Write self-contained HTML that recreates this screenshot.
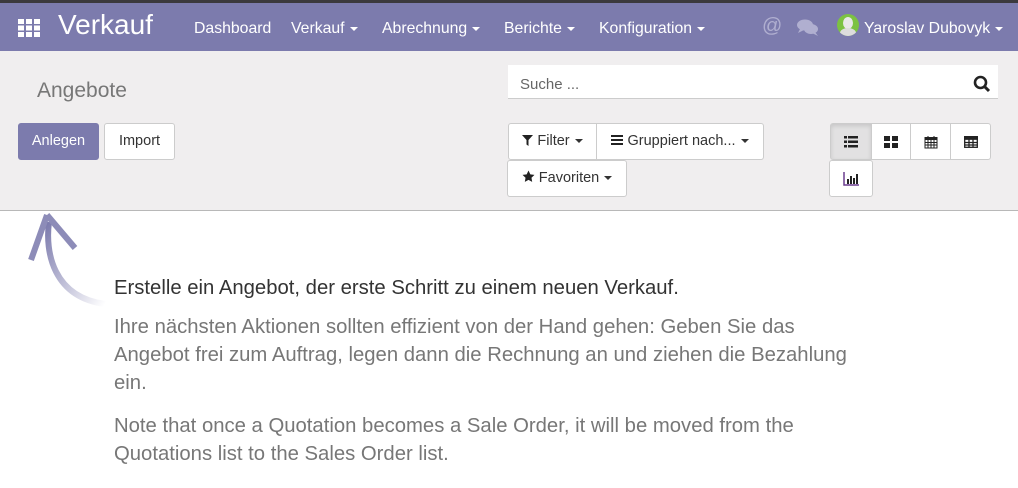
<!DOCTYPE html>
<html><head><meta charset="utf-8"><style>
*{box-sizing:border-box;margin:0;padding:0}
body{width:1018px;height:488px;overflow:hidden;background:#fff;font-family:"Liberation Sans",sans-serif;position:relative}
.top{position:absolute;left:0;top:0;width:1018px;height:3px;background:#3b393d}
.nav{position:absolute;left:0;top:3px;width:1018px;height:48px;background:#7c7bad;color:#fff}
.nav span{position:absolute;top:17px;font-size:15.8px}
.car{display:inline-block;width:0;height:0;border-left:4px solid transparent;border-right:4px solid transparent;border-top:4px solid #fff;vertical-align:middle;margin-left:5px}
.cp{position:absolute;left:0;top:51px;width:1018px;height:160px;background:#f0eeef;border-bottom:1px solid #b8b8b8}
.btn{position:absolute;background:#fff;border:1px solid #ccc;border-radius:3px;font-size:14.5px;color:#333;text-align:center}
.p{position:absolute;left:114px;font-size:20.3px;color:#777;line-height:28px;width:740px}
</style></head><body>
<div class="top"></div>
<div class="nav">
<svg style="position:absolute;left:18px;top:16px" width="22" height="18" viewBox="0 0 22 18" fill="#fff"><rect x="0" y="0" width="6" height="5"/><rect x="8" y="0" width="6" height="5"/><rect x="16" y="0" width="6" height="5"/><rect x="0" y="6.5" width="6" height="5"/><rect x="8" y="6.5" width="6" height="5"/><rect x="16" y="6.5" width="6" height="5"/><rect x="0" y="13" width="6" height="5"/><rect x="8" y="13" width="6" height="5"/><rect x="16" y="13" width="6" height="5"/></svg>
<span style="left:58px;top:6px;font-size:28px">Verkauf</span>
<span style="left:194px">Dashboard</span>
<span style="left:291px">Verkauf<i class="car"></i></span>
<span style="left:382px">Abrechnung<i class="car"></i></span>
<span style="left:504px">Berichte<i class="car"></i></span>
<span style="left:599px">Konfiguration<i class="car"></i></span>
<span style="left:762px;top:12px;font-size:20px;color:#b0afd0">@</span>
<svg style="position:absolute;left:797px;top:16px" width="22" height="18" viewBox="0 0 22 18" fill="#b0afd0"><ellipse cx="8" cy="6" rx="8" ry="5.5"/><path d="M3 10 L1 14 L7 11Z"/><ellipse cx="14" cy="10" rx="7" ry="5"/><path d="M18 13 L21 17 L15 14Z"/></svg>
<div style="position:absolute;left:837px;top:11px;width:22px;height:22px;border-radius:50%;background:#7cc242;overflow:hidden"><div style="position:absolute;left:6px;top:3px;width:10px;height:12px;border-radius:50%;background:#e8e8e8"></div><div style="position:absolute;left:3px;top:14px;width:16px;height:10px;border-radius:50%;background:#ddd"></div></div>
<span style="left:864px">Yaroslav Dubovyk<i class="car"></i></span>
</div>
<div class="cp">
<div style="position:absolute;left:37px;top:28px;font-size:21px;color:#777">Angebote</div>
<div class="btn" style="left:18px;top:72px;width:81px;height:37px;line-height:35px;background:#7c7bad;border-color:#7c7bad;color:#fff">Anlegen</div>
<div class="btn" style="left:104px;top:72px;width:71px;height:37px;line-height:35px">Import</div>
<div style="position:absolute;left:508px;top:14px;width:490px;height:34px;background:#fff;border-bottom:1px solid #ccc;font-size:15px;color:#666;padding:11px 12px">Suche ...</div>
<svg style="position:absolute;left:973px;top:24px" width="18" height="18" viewBox="0 0 18 18"><circle cx="7.5" cy="7.5" r="5.5" fill="none" stroke="#222" stroke-width="2.6"/><path d="M11.5 11.5 L16 16" stroke="#222" stroke-width="3"/></svg>
<div class="btn" style="left:508px;top:72px;width:89px;height:37px;line-height:35px;border-radius:3px 0 0 3px"><svg width="11" height="11" viewBox="0 0 11 11" style="vertical-align:-1px"><path d="M0 0H11L6.5 5V11L4.5 9.5V5Z" fill="#222"/></svg> Filter<i class="car" style="border-top-color:#333"></i></div>
<div class="btn" style="left:596px;top:72px;width:168px;height:37px;line-height:35px;border-radius:0 3px 3px 0"><svg width="12" height="10" viewBox="0 0 12 10" style="vertical-align:0"><rect y="0" width="12" height="2" fill="#222"/><rect y="4" width="12" height="2" fill="#222"/><rect y="8" width="12" height="2" fill="#222"/></svg> Gruppiert nach...<i class="car" style="border-top-color:#333"></i></div>
<div class="btn" style="left:507px;top:109px;width:120px;height:37px;line-height:35px"><svg width="13" height="13" viewBox="0 0 24 24" style="vertical-align:-1px"><path d="M12 1l3.4 7 7.6 1-5.5 5.3 1.3 7.7L12 18.3 5.2 22l1.3-7.7L1 9l7.6-1z" fill="#222"/></svg> Favoriten<i class="car" style="border-top-color:#333"></i></div>
<div class="btn" style="left:830px;top:72px;width:42px;height:37px;background:#e2e1e2;border-radius:3px 0 0 3px;box-shadow:inset 0 2px 4px rgba(0,0,0,.12)"><svg style="margin-top:12px" width="14" height="12" viewBox="0 0 14 12" fill="#222"><rect width="3" height="2.5"/><rect x="4" width="10" height="2.5"/><rect y="4.5" width="3" height="2.5"/><rect x="4" y="4.5" width="10" height="2.5"/><rect y="9" width="3" height="2.5"/><rect x="4" y="9" width="10" height="2.5"/></svg></div>
<div class="btn" style="left:871px;top:72px;width:40px;height:37px;border-radius:0"><svg style="margin-top:12px" width="14" height="12" viewBox="0 0 14 12" fill="#222"><rect width="6" height="5"/><rect x="8" width="6" height="5"/><rect y="7" width="6" height="5"/><rect x="8" y="7" width="6" height="5"/></svg></div>
<div class="btn" style="left:910px;top:72px;width:41px;height:37px;border-radius:0"><svg style="margin-top:11px" width="14" height="14" viewBox="0 0 14 14" fill="none" stroke="#222" stroke-width="1"><rect x="1" y="2.5" width="12" height="10.5"/><rect x="1" y="2.5" width="12" height="2" fill="#222"/><path d="M4 1v3M10 1v3M1 7.5h12M1 10h12M4 5v8M7 5v8M10 5v8"/></svg></div>
<div class="btn" style="left:950px;top:72px;width:41px;height:37px;border-radius:0 3px 3px 0"><svg style="margin-top:12px" width="14" height="12" viewBox="0 0 14 12" fill="none" stroke="#222" stroke-width="1.3"><rect x="0.7" y="0.7" width="12.6" height="10.6"/><rect x="0.7" y="0.7" width="12.6" height="2.5" fill="#222"/><path d="M0.7 6.5h12.6M0.7 9h12.6M5 3v8M9 3v8"/></svg></div>
<div class="btn" style="left:829px;top:109px;width:44px;height:37px"><svg style="margin-top:11px" width="16" height="14" viewBox="0 0 16 14"><path d="M1 0v13h15" stroke="#6c3f8f" stroke-width="1.5" fill="none"/><rect x="4" y="7" width="2" height="5" fill="#222"/><rect x="7" y="4" width="2" height="8" fill="#222"/><rect x="10" y="6" width="2" height="6" fill="#222"/><rect x="13" y="2" width="2" height="10" fill="#222"/></svg></div>
</div>
<svg style="position:absolute;left:25px;top:212px" width="85" height="100" viewBox="0 0 85 100">
<defs><linearGradient id="g" x1="0" y1="0" x2="1" y2="1"><stop offset="0" stop-color="#7c7bad"/><stop offset="1" stop-color="#7c7bad" stop-opacity="0"/></linearGradient></defs>
<path d="M24 10 C20 40 28 85 80 92" stroke="url(#g)" stroke-width="6" fill="none"/>
<path d="M22 3 L6 48 M22 3 L50 36" stroke="#8d8cb8" stroke-width="6" fill="none"/>
</svg>
<div class="p" style="top:274px;color:#333">Erstelle ein Angebot, der erste Schritt zu einem neuen Verkauf.</div>
<div class="p" style="top:313px">Ihre nächsten Aktionen sollten effizient von der Hand gehen: Geben Sie das Angebot frei zum Auftrag, legen dann die Rechnung an und ziehen die Bezahlung ein.</div>
<div class="p" style="top:412px">Note that once a Quotation becomes a Sale Order, it will be moved from the Quotations list to the Sales Order list.</div>
</body></html>
